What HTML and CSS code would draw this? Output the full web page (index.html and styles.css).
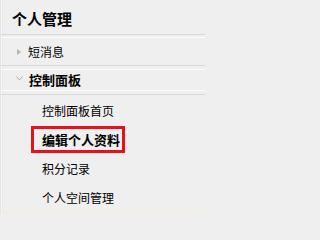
FILE: index.html
```html
<!DOCTYPE html>
<html lang="zh-CN">
<head>
<meta charset="utf-8">
<link rel="stylesheet" href="styles.css">
</head>
<body>
<div class="panel">
  <div class="title">个人管理</div>
  <div class="sep sep-down"></div>
  <div class="group">
    <span class="tri"></span>
    <span class="group-text">短消息</span>
  </div>
  <div class="sep sep-down2"></div>
  <div class="group group-open">
    <svg class="chev" width="7" height="5" viewBox="0 0 7 5"><path d="M0.5 0.5 L3.5 4 L6.5 0.5" fill="none" stroke="#b0b0b0" stroke-width="1"/></svg>
    <span class="group-text bold">控制面板</span>
  </div>
  <div class="sep sep-up"></div>
  <ul class="sub">
    <li><a class="link">控制面板首页</a></li>
    <li><a class="link active">编辑个人资料</a></li>
    <li><a class="link">积分记录</a></li>
    <li><a class="link">个人空间管理</a></li>
  </ul>
</div>
</body>
</html>
```
FILE: styles.css
```css
html, body {
  margin: 0;
  padding: 0;
  background: #efefef;
}
.panel {
  width: 205px;
  height: 214px;
  box-sizing: border-box;
  background: #efefef;
  border-left: 1px solid #e4e4e4;
  border-bottom: 3px solid #f3ede7;
  box-shadow: inset 1px 0 0 #f8f8f8, inset 2px 0 0 #e9e9e9;
  font-family: "Noto Sans CJK SC", "Noto Sans", sans-serif;
  color: #000;
  overflow: hidden;
}
.title {
  height: 34px;
  box-sizing: border-box;
  padding: 10px 0 0 11px;
  font-size: 15px;
  font-weight: bold;
  line-height: 17px;
}
.sep {
  height: 2px;
}
.sep-down {
  border-top: 1px solid #d9d9d9;
  border-bottom: 1px solid #fbfbfb;
}
.sep-down2 {
  height: 3px;
  border-top: 1px solid #d9d9d9;
  border-bottom: 1px solid #fbfbfb;
}
.sep-up {
  height: 3px;
  border-top: 1px solid #fbfbfb;
  border-bottom: 1px solid #d9d9d9;
}
.group {
  height: 27px;
  display: flex;
  align-items: center;
  padding-left: 15px;
}
.group-open {
  height: 20px;
}
.tri {
  width: 0;
  height: 0;
  border-top: 3px solid transparent;
  border-bottom: 3px solid transparent;
  border-left: 4px solid #b5b5b5;
  margin: 0 7px 0 1px;
}
.chev {
  margin: -3px 6px 0 0;
  flex: none;
}
.group-text {
  font-size: 12px;
  line-height: 14px;
}
.bold {
  font-size: 13px;
  font-weight: bold;
}
.sub {
  list-style: none;
  margin: 0;
  padding: 1px 0 0 30px;
}
.sub li {
  height: 29px;
  display: flex;
  align-items: center;
}
.link {
  display: inline-block;
  box-sizing: border-box;
  height: 27px;
  line-height: 21px;
  padding: 0 2px 0 8px;
  border: 3px solid transparent;
  font-size: 12px;
  color: #000;
}
.link.active {
  border-color: #e8101a;
  font-size: 13px;
  font-weight: bold;
}
```
